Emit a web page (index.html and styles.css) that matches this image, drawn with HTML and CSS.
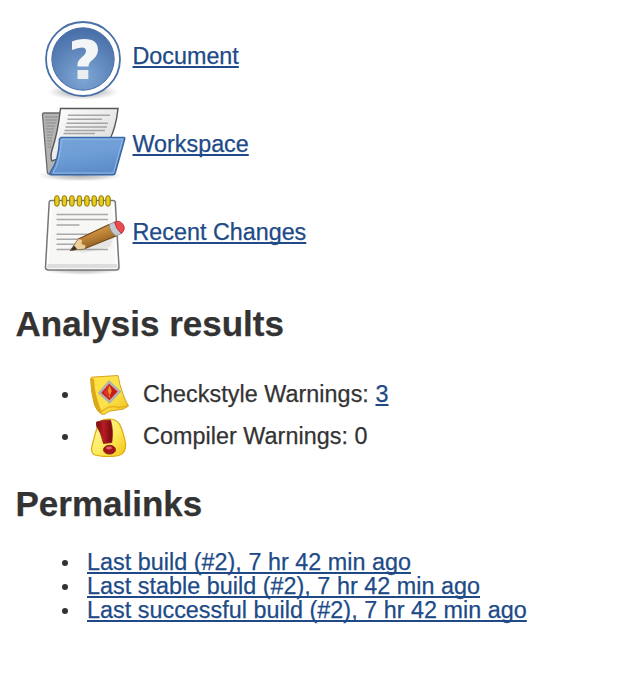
FILE: index.html
```
<!DOCTYPE html>
<html lang="en">
<head>
<meta charset="utf-8">
<title>Project</title>
<link rel="stylesheet" href="styles.css">
</head>
<body>
<main>
  <nav class="shortcuts">
    <div class="shortcut">
      <svg class="shortcut-icon" viewBox="33 12 100 88" aria-hidden="true">
        <defs>
          <radialGradient id="helpBlue" cx=".5" cy=".8" r=".75"><stop offset="0" stop-color="#7fa8d6"/><stop offset="1" stop-color="#4a70a9"/></radialGradient>
          <radialGradient id="shade"><stop offset="0" stop-color="#555" stop-opacity=".5"/><stop offset=".6" stop-color="#777" stop-opacity=".3"/><stop offset="1" stop-color="#999" stop-opacity="0"/></radialGradient>
        </defs>
        <ellipse cx="83" cy="92" rx="36" ry="8" fill="url(#shade)"/>
        <circle cx="83" cy="59" r="37" fill="#fff" stroke="#4a70a9" stroke-width="1.800"/>
        <circle cx="83" cy="59" r="31.200" fill="url(#helpBlue)" stroke="#4a70a9" stroke-width="1"/>
        <path d="M72 41.500Q77 39 84.500 39Q98 39 98 50Q98 55 93 59.500Q88.500 62.500 88.500 66.500H77.500Q77 61 81.500 57.500Q86 54 86 51Q86 47.500 82 47.500Q78 47.500 72 50Z" fill="#f4f5f6"/>
        <rect x="77.500" y="70" width="10.800" height="9" fill="#ecedef"/>
      </svg>
      <a href="#">Document</a>
    </div>
    <div class="shortcut">
      <svg class="shortcut-icon" viewBox="33 100 100 88" aria-hidden="true">
        <defs>
          <linearGradient id="folderBlue" x1="0" y1="0" x2=".3" y2="1"><stop offset="0" stop-color="#75a3da"/><stop offset=".5" stop-color="#6f9fd6"/><stop offset="1" stop-color="#5c8dca"/></linearGradient>
          <linearGradient id="paper" x1="0" y1="0" x2="1" y2="1"><stop offset="0" stop-color="#fff"/><stop offset="1" stop-color="#d6d6d6"/></linearGradient>
        </defs>
        <ellipse cx="80" cy="175.500" rx="43" ry="6" fill="url(#shade)"/>
        <path d="M42.500 114.500Q42.500 113 44 113H64V174H49.500Q47.500 174 47.300 172Z" fill="#b4b4b4" stroke="#6a6a6a" stroke-width="1.300"/>
        <path d="M45 117H58M45.300 120H57M45.600 123H56M46 126H55M46 129H54M46.500 132H54M46.500 135H53M47 138H52M47 141H52M47.500 144H51M47.500 147H51" stroke="#8b8b8b" stroke-width="1"/>
        <path d="M60.500 108.500H118Q116 128 109 141L52 161Q50 157 52 150Q58 132 60.500 108.500Z" fill="url(#paper)" stroke="#555" stroke-width="1.400"/>
        <path d="M68 115.300H110M67.500 119.300H102M66.500 123.300H108M65.500 127H107M64.500 130.500H105M63.500 133.500H95" stroke="#a5a5a5" stroke-width="1.500"/>
        <path d="M61 137.500H124Q125 137.500 124.700 139L115.200 173Q114.700 174.800 113 174.800H51Q49.500 174.800 50.500 172Q59 160 59.500 139Z" fill="url(#folderBlue)" stroke="#3969a7" stroke-width="1.500"/>
        <path d="M61.500 139.200H122.700L113.500 173H53Q60 162 61.500 139.200Z" fill="none" stroke="#96b9e5" stroke-width="1"/>
      </svg>
      <a href="#">Workspace</a>
    </div>
    <div class="shortcut">
      <svg class="shortcut-icon" viewBox="33 188 100 88" aria-hidden="true">
        <defs>
          <linearGradient id="pencil" x1="0" y1="0" x2=".55" y2="1"><stop offset="0" stop-color="#e7bd73"/><stop offset=".5" stop-color="#c5893a"/><stop offset="1" stop-color="#81551d"/></linearGradient>
        </defs>
        <ellipse cx="82" cy="269" rx="41" ry="6" fill="url(#shade)"/>
        <path d="M51 200.500H113Q115 200.500 115.300 202L119 267Q119 270 116 270H48.500Q45.500 270 45.500 267L49.200 202Q49.500 200.500 51 200.500Z" fill="#f7f7f6" stroke="#777" stroke-width="1.500"/>
        <path d="M51.500 204L47.500 267.500H117L113 204" fill="none" stroke="#fff" stroke-width="1.500"/>
        <path d="M47.500 264H117L117.500 268H47Z" fill="#ddd"/>
        <path d="M56.500 214.500H108M56.500 219.500H108M56.500 225H79.500M56.500 234.300H99M56.500 239.300H84M56.500 244.300H75M56.500 249.500H108" stroke="#a9a9a9" stroke-width="1.500"/>
        <g fill="#e9cb1c" stroke="#8d7800" stroke-width="1">
          <rect x="54.700" y="195.700" width="4.400" height="10.500" rx="2.200"/><rect x="62.200" y="195.700" width="4.400" height="10.500" rx="2.200"/><rect x="69.700" y="195.700" width="4.400" height="10.500" rx="2.200"/><rect x="77.200" y="195.700" width="4.400" height="10.500" rx="2.200"/><rect x="84.700" y="195.700" width="4.400" height="10.500" rx="2.200"/><rect x="92" y="195.700" width="4.400" height="10.500" rx="2.200"/><rect x="99" y="195.700" width="4.400" height="10.500" rx="2.200"/><rect x="105.800" y="195.700" width="4.400" height="10.500" rx="2.200"/>
        </g>
        <path d="M76 251L115 235L110 247L83 253Z" fill="#888" opacity=".15"/>
        <path d="M70.500 250.500L78.500 239L109 224.500L116 236L85 248.500Z" fill="url(#pencil)" stroke="#70471a" stroke-width="1.200" stroke-linejoin="round"/>
        <path d="M70.500 250.500L78.500 239L82 240L81.500 244L85.500 245.500L85 248.500Z" fill="#edcf9c"/>
        <path d="M70.500 250.500L74 245.500L77.500 249.500Z" fill="#333"/>
        <path d="M109 224.500L114.500 222L121.500 233.500L116 236Q110 232 109 224.500Z" fill="#c5c8cf" stroke="#888" stroke-width=".8"/>
        <path d="M114.500 222Q120 220 123 224.500Q126 229 121.500 233.500Q116 229 114.500 222Z" fill="#ee4b50" stroke="#b73236" stroke-width="1"/>
      </svg>
      <a href="#">Recent Changes</a>
    </div>
  </nav>

  <h2>Analysis results</h2>
  <ul class="warnings">
    <li>
      <svg class="warning-icon" viewBox="87 373 56 42" aria-hidden="true">
        <defs><linearGradient id="note" x1="0" y1="0" x2="1" y2="1"><stop stop-color="#ffe040"/><stop offset=".55" stop-color="#fbe34c"/><stop offset="1" stop-color="#efbb18"/></linearGradient></defs>
        <path d="M90.500 379Q91 376.500 94 377L118 375.500Q119.500 385 123 394Q125 400 128.500 406Q123 410.500 117 410Q109 410 103 415Q97 412 94.500 405Q91 392 90.500 379Z" fill="url(#note)" stroke="#d5a326" stroke-width="1"/>
        <path d="M91 378L94 379Q94.500 396 102.500 413.500Q97 412 94.500 405Q91 393 91 378Z" fill="#dda71a"/>
        <path d="M101 412Q109 405 117 407Q123 408 127.500 405" fill="none" stroke="#e7b31b" stroke-width="1.500"/>
        <path d="M109 382L119.500 391.500L109.500 402L99.500 393Z" fill="#c9191b" stroke="#b3b0ac" stroke-width="2.600"/>
        <path d="M109 385V398L103.500 392.500Z" fill="#d8382a"/>
        <path d="M109.500 386.500L111.200 391L109.800 394.500L108.500 391ZM109.600 395.500V397.500" fill="#ed9b25" stroke="#ed9b25" stroke-width="1"/>
      </svg>
      <span>Checkstyle Warnings: <a href="#">3</a></span>
    </li>
    <li>
      <svg class="warning-icon" viewBox="87 415 56 42" aria-hidden="true">
        <defs><linearGradient id="blob" x1="0" y1="0" x2="1" y2="1"><stop stop-color="#fff8ae"/><stop offset=".55" stop-color="#fcea5c"/><stop offset="1" stop-color="#f5c313"/></linearGradient>
        <linearGradient id="bang"><stop stop-color="#790d11"/><stop offset=".45" stop-color="#b81c22"/><stop offset="1" stop-color="#6e090d"/></linearGradient></defs>
        <path d="M99 422Q103 419 109 419Q116 419 119.500 424Q123 431 125.500 443Q126.500 453 119 455.500Q107 458 95 455Q90.500 453 92 446Q95 433 99 422Z" fill="url(#blob)" stroke="#dfa90a" stroke-width="1.200"/>
        <path d="M96.500 422Q103 420 110.500 420Q113.500 430 111.800 442.500L103.500 443.500Q101 432 96.500 426Z" fill="url(#bang)" stroke="#8b191c" stroke-width=".8"/>
        <ellipse cx="109.500" cy="449.700" rx="6" ry="4.400" fill="#a4151b" stroke="#7b1013" stroke-width=".8"/>
        <ellipse cx="109" cy="448" rx="3" ry="1.400" fill="#df6264"/>
      </svg>
      <span>Compiler Warnings: 0</span>
    </li>
  </ul>

  <h2>Permalinks</h2>
  <ul class="permalinks">
    <li><a href="#">Last build (#2), 7 hr 42 min ago</a></li>
    <li><a href="#">Last stable build (#2), 7 hr 42 min ago</a></li>
    <li><a href="#">Last successful build (#2), 7 hr 42 min ago</a></li>
  </ul>
</main>
</body>
</html>
```
FILE: styles.css
```
* {
  box-sizing: border-box;
}

body {
  margin: 0;
  padding: 12px 15.5px;
  background: #fff;
  color: #333;
  font: 23.33px/24px "Liberation Sans", Helvetica, Arial, sans-serif;
  -webkit-text-stroke: 0.25px currentColor;
}

a {
  color: #204a87;
  text-decoration: underline;
  text-decoration-thickness: 2px;
  text-underline-offset: 2px;
  text-decoration-skip-ink: none;
}

.shortcuts {
  padding-left: 17px;
}

.shortcut {
  display: flex;
  align-items: center;
  height: 88px;
}

.shortcut-icon {
  flex: none;
  width: 100px;
  height: 88px;
}

h2 {
  margin: 28px 0 29px;
  font-size: 35px;
  line-height: 40px;
  font-weight: bold;
}

ul {
  margin: 0;
  padding: 0 0 0 46.5px;
  list-style: none;
}

li {
  display: flex;
  align-items: center;
  white-space: nowrap;
}

li::before {
  content: "";
  flex: none;
  width: 6px;
  height: 6px;
  margin: 1px 19px 0 0;
  border-radius: 50%;
  background: #333;
}

.warnings li {
  height: 42px;
  letter-spacing: 0.06px;
}

.warning-icon {
  flex: none;
  width: 56px;
  height: 42px;
}

.warnings + h2 {
  margin: 27px 0 26px;
}

.permalinks li {
  height: 24px;
  letter-spacing: 0.035px;
}
```
